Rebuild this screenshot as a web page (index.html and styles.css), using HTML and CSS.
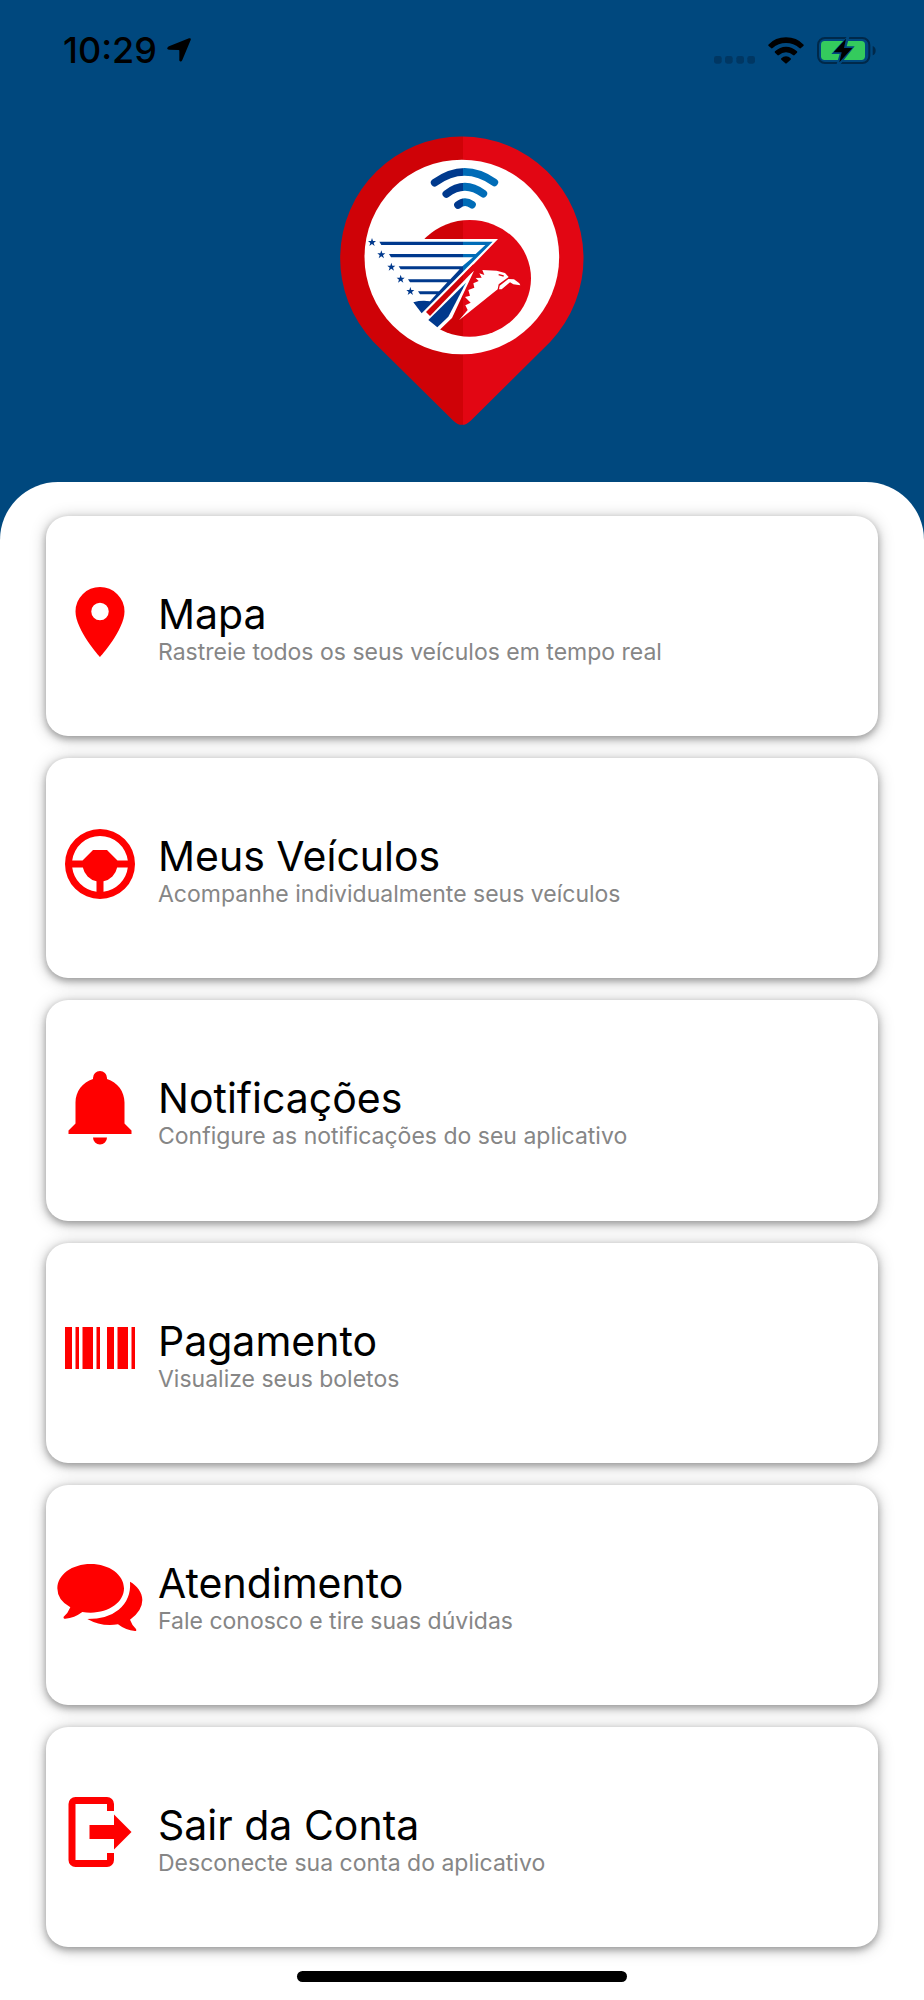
FILE: index.html
```html
<!DOCTYPE html>
<html lang="pt-BR">
<head>
<meta charset="utf-8">
<meta name="viewport" content="width=device-width, initial-scale=1">
<title>Rastreamento</title>
<link rel="stylesheet" href="styles.css">
</head>
<body>
<div class="app">
  <div class="status">
    <div class="status-group">
      <span class="clock">10:29</span>
      <svg class="location" viewBox="0 0 72 72" aria-hidden="true"><path d="M66 1q7-2 5 5L46 66q-3 6-7 4-3-2-2-6V38q0-2-2-2L6 35q-7-1-5-5 1-3 5-5z"/></svg>
    </div>
    <div class="status-group status-right">
      <svg class="signal" viewBox="0 0 123 24" aria-hidden="true"><g fill="#003763"><rect width="23" height="23" rx="7"/><rect x="33" width="23" height="23" rx="7"/><rect x="67" width="23" height="23" rx="7"/><rect x="100" width="23" height="23" rx="7"/></g></svg>
      <svg class="wifi" viewBox="0 0 108 81" aria-hidden="true"><path d="M1 23Q22 1 54 1t53 22q1 2-1 4l-8 7q-2 1-4-1Q77 18 54 18T14 33q-2 2-4 1l-8-7q-2-2-1-4zM21 43q14-14 33-14t33 14q2 2 0 4l-8 8q-2 1-4-1-9-8-21-8t-21 8q-2 2-4 1l-8-8q-2-2 0-4zM40 64q6-6 14-6t14 6q2 2 0 4L56 79q-2 2-4 0L40 68q-2-2 0-4z"/></svg>
      <svg class="battery" viewBox="0 0 177 81" aria-hidden="true"><rect x="3" y="3" width="154" height="75" rx="21" fill="none" stroke="#00294a" stroke-width="6"/><path d="M167 27q9 4 9 14t-9 14z" fill="#00294a"/><rect x="12" y="12" width="132" height="57" rx="11" fill="#34cb5d"/><path d="M89 0 43 51h25L59 81h12l42-53H89l8-28z" fill="#00487e"/><path d="M87 5 50 46h24l-7 30 39-43H81z"/></svg>
    </div>
  </div>

  <header class="brand">
    <svg class="logo" viewBox="30 45 732 870" role="img" aria-label="Logotipo">
      <defs>
        <linearGradient id="red" gradientUnits="userSpaceOnUse" x1="398" y1="0" x2="399" y2="0"><stop offset="0" stop-color="#cf0207"/><stop offset="1" stop-color="#e20613"/></linearGradient>
        <linearGradient id="blue" gradientUnits="userSpaceOnUse" x1="398" y1="0" x2="399" y2="0"><stop offset="0" stop-color="#00398d"/><stop offset="1" stop-color="#006cb7"/></linearGradient>
        <path id="star" d="M0-13 3-4H12L5 2 8 11 0 5-8 11-5 2-12-4H-3z"/>
      </defs>
      <path fill="url(#red)" d="M130 665A365 365 0 1 1 661 665L422 902q-26 25-52 0z"/>
      <circle cx="395.500" cy="411" r="292" fill="#fff"/>
      <g fill="none" stroke="url(#blue)" stroke-width="23" stroke-linecap="round"><path d="M314 188Q403 124 493 187M349 222Q404 179 460 221M384 255Q404 238 426 254"/></g>
      <ellipse cx="419" cy="475" rx="184" ry="175" fill="url(#red)"/>
      <path fill="#fff" d="M220 357H504L286 583 300 640H220z"/>
      <path fill="#fff" d="M432 452 366 594 331 628 240 640 240 550 330 535z"/>
      <path fill="url(#red)" d="M288 576 430 433 436 447 300 588z"/>
      <path fill="url(#blue)" d="M148 365H488L275 580 250 547Q275 540 300 544L319 523H270L264 514H327L352 487H240L234 478H361L389 448H212L206 439H397L429 412H183L177 402H437L466 375H154z"/>
      <path fill="url(#blue)" d="M408 488 355 590 322 622 295 600z"/>
      <g fill="#00398d"><use href="#star" x="126" y="367"/><use href="#star" x="154" y="404"/><use href="#star" x="184" y="441"/><use href="#star" x="212" y="477"/><use href="#star" x="241" y="514"/></g>
      <path fill="#fff" d="M457 450 500 452 525 459 536 471 506 493 503 508 387 601 413 570 406 556 422 548 405 531 420 527 415 510 433 503 430 490 446 483 437 474 455 473 448 460 463 465z"/>
      <path fill="#fff" d="M509 497 535 477 552 478 568 490 571 496 550 493 540 487 515 508 507 508z"/>
      <path fill="none" stroke="#e20613" stroke-width="4" d="M506 464 521 468"/>
    </svg>
  </header>

  <main class="sheet">
    <nav class="menu" aria-label="Menu principal">
      <a class="card" href="#mapa">
        <svg class="icon" viewBox="0 0 24 24" aria-hidden="true"><path d="M12 11.500A2.500 2.500 0 0 1 9.500 9 2.500 2.500 0 0 1 12 6.500 2.500 2.500 0 0 1 14.500 9 2.500 2.500 0 0 1 12 11.500M12 2A7 7 0 0 0 5 9C5 14.250 12 22 12 22S19 14.250 19 9A7 7 0 0 0 12 2z"/></svg>
        <span class="text"><span class="title">Mapa</span><span class="subtitle">Rastreie todos os seus veículos em tempo real</span></span>
      </a>
      <a class="card" href="#veiculos">
        <svg class="icon" viewBox="0 0 24 24" aria-hidden="true"><path fill-rule="evenodd" d="M12 2a10 10 0 1 0 0 20 10 10 0 0 0 0-20zM12 4a8 8 0 0 1 7.940 7H17l-3-3h-4l-3 3H4.060A8 8 0 0 1 12 4zM4.060 13H7.100A5 5 0 0 0 11 16.900V19.940A8 8 0 0 1 4.060 13zM13 16.900A5 5 0 0 0 16.900 13h3.040A8 8 0 0 1 13 19.940z"/></svg>
        <span class="text"><span class="title">Meus Veículos</span><span class="subtitle">Acompanhe individualmente seus veículos</span></span>
      </a>
      <a class="card" href="#notificacoes">
        <svg class="icon" viewBox="0 0 24 24" aria-hidden="true"><path d="M21 19v1H3v-1l2-2v-6c0-3.100 2.030-5.830 5-6.710V4a2 2 0 0 1 4 0v.290c2.970.880 5 3.610 5 6.710v6zM14 21a2 2 0 0 1-4 0"/></svg>
        <span class="text"><span class="title">Notificações</span><span class="subtitle">Configure as notificações do seu aplicativo</span></span>
      </a>
      <a class="card" href="#pagamento">
        <svg class="icon" viewBox="0 0 24 24" aria-hidden="true"><path d="M2 6h2v12H2zM5 6h1v12H5zM7 6h3v12H7zM11 6h1v12h-1zM14 6h2v12h-2zM17 6h3v12h-3zM21 6h1v12h-1z"/></svg>
        <span class="text"><span class="title">Pagamento</span><span class="subtitle">Visualize seus boletos</span></span>
      </a>
      <a class="card" href="#atendimento">
        <svg class="icon" viewBox="2 -21 252 252" aria-hidden="true"><path d="M100 27c56 0 100 32 100 73s-44 73-100 73q-13 0-25-2-24 18-51 20-7 0-5-6 13-10 20-28Q0 136 0 100c0-41 44-73 100-73zM218 80c21 12 37 32 37 55q0 33-37 59 6 17 18 28 3 6-3 6-28-2-51-20-50 8-92-16 60 0 94-28 38-32 34-84z"/></svg>
        <span class="text"><span class="title">Atendimento</span><span class="subtitle">Fale conosco e tire suas dúvidas</span></span>
      </a>
      <a class="card" href="#sair">
        <svg class="icon" viewBox="0 0 24 24" aria-hidden="true"><path d="M9 10h7V7l5 5-5 5v-3H9zM5 2h9a2 2 0 0 1 2 2v2h-2V4H5v16h9v-2h2v2a2 2 0 0 1-2 2H5a2 2 0 0 1-2-2V4a2 2 0 0 1 2-2z"/></svg>
        <span class="text"><span class="title">Sair da Conta</span><span class="subtitle">Desconecte sua conta do aplicativo</span></span>
      </a>
    </nav>
    <div class="home-bar"></div>
  </main>
</div>
</body>
</html>
```
FILE: styles.css
```css
* {
  box-sizing: border-box;
}

body {
  margin: 0;
  background: #00487e;
  color: #000;
  font-family: Inter, "Liberation Sans", sans-serif;
}

svg {
  display: block;
  flex: none;
}

.app {
  display: flex;
  flex-direction: column;
  min-height: 100vh;
}

.status {
  display: flex;
  justify-content: space-between;
  align-items: center;
  height: 100px;
  padding: 0 48px 0 63px;
}

.status-group {
  display: flex;
  align-items: center;
  gap: 10px;
}

.status-right {
  align-items: flex-end;
  gap: 13px;
}

.clock {
  font-size: 36px;
  font-weight: 500;
}

.location {
  width: 24px;
  height: 24px;
}

.signal {
  width: 41px;
  height: 8px;
}

.wifi {
  width: 36px;
  height: 27px;
}

.battery {
  width: 59px;
  height: 27px;
}

.brand {
  display: flex;
  justify-content: center;
  padding: 35px 0 57px;
}

.logo {
  width: 244px;
  height: 290px;
}

.sheet {
  display: flex;
  flex: 1;
  flex-direction: column;
  padding: 34px 46px 18px;
  border-radius: 58px 58px 0 0;
  background: #fff;
}

.menu {
  display: flex;
  flex: 1;
  flex-direction: column;
  gap: 22px;
}

.card {
  display: flex;
  flex: 1;
  align-items: center;
  gap: 16px;
  padding: 12px;
  border-radius: 22px;
  background: #fff;
  box-shadow: 0 2px 16px rgba(0, 0, 0, 0.26), 0 3px 7px rgba(0, 0, 0, 0.28);
  color: inherit;
  text-decoration: none;
}

.icon {
  width: 84px;
  height: 84px;
  margin-bottom: 9px;
  overflow: visible;
  fill: #f00;
}

.text {
  display: flex;
  flex-direction: column;
  padding-top: 4px;
}

.title {
  font-size: 41px;
  line-height: 48px;
}

.subtitle {
  color: #868686;
  font-size: 23px;
  line-height: 28px;
}

.home-bar {
  align-self: center;
  width: 330px;
  height: 11px;
  margin-top: 24px;
  border-radius: 6px;
  background: #000;
}
```
